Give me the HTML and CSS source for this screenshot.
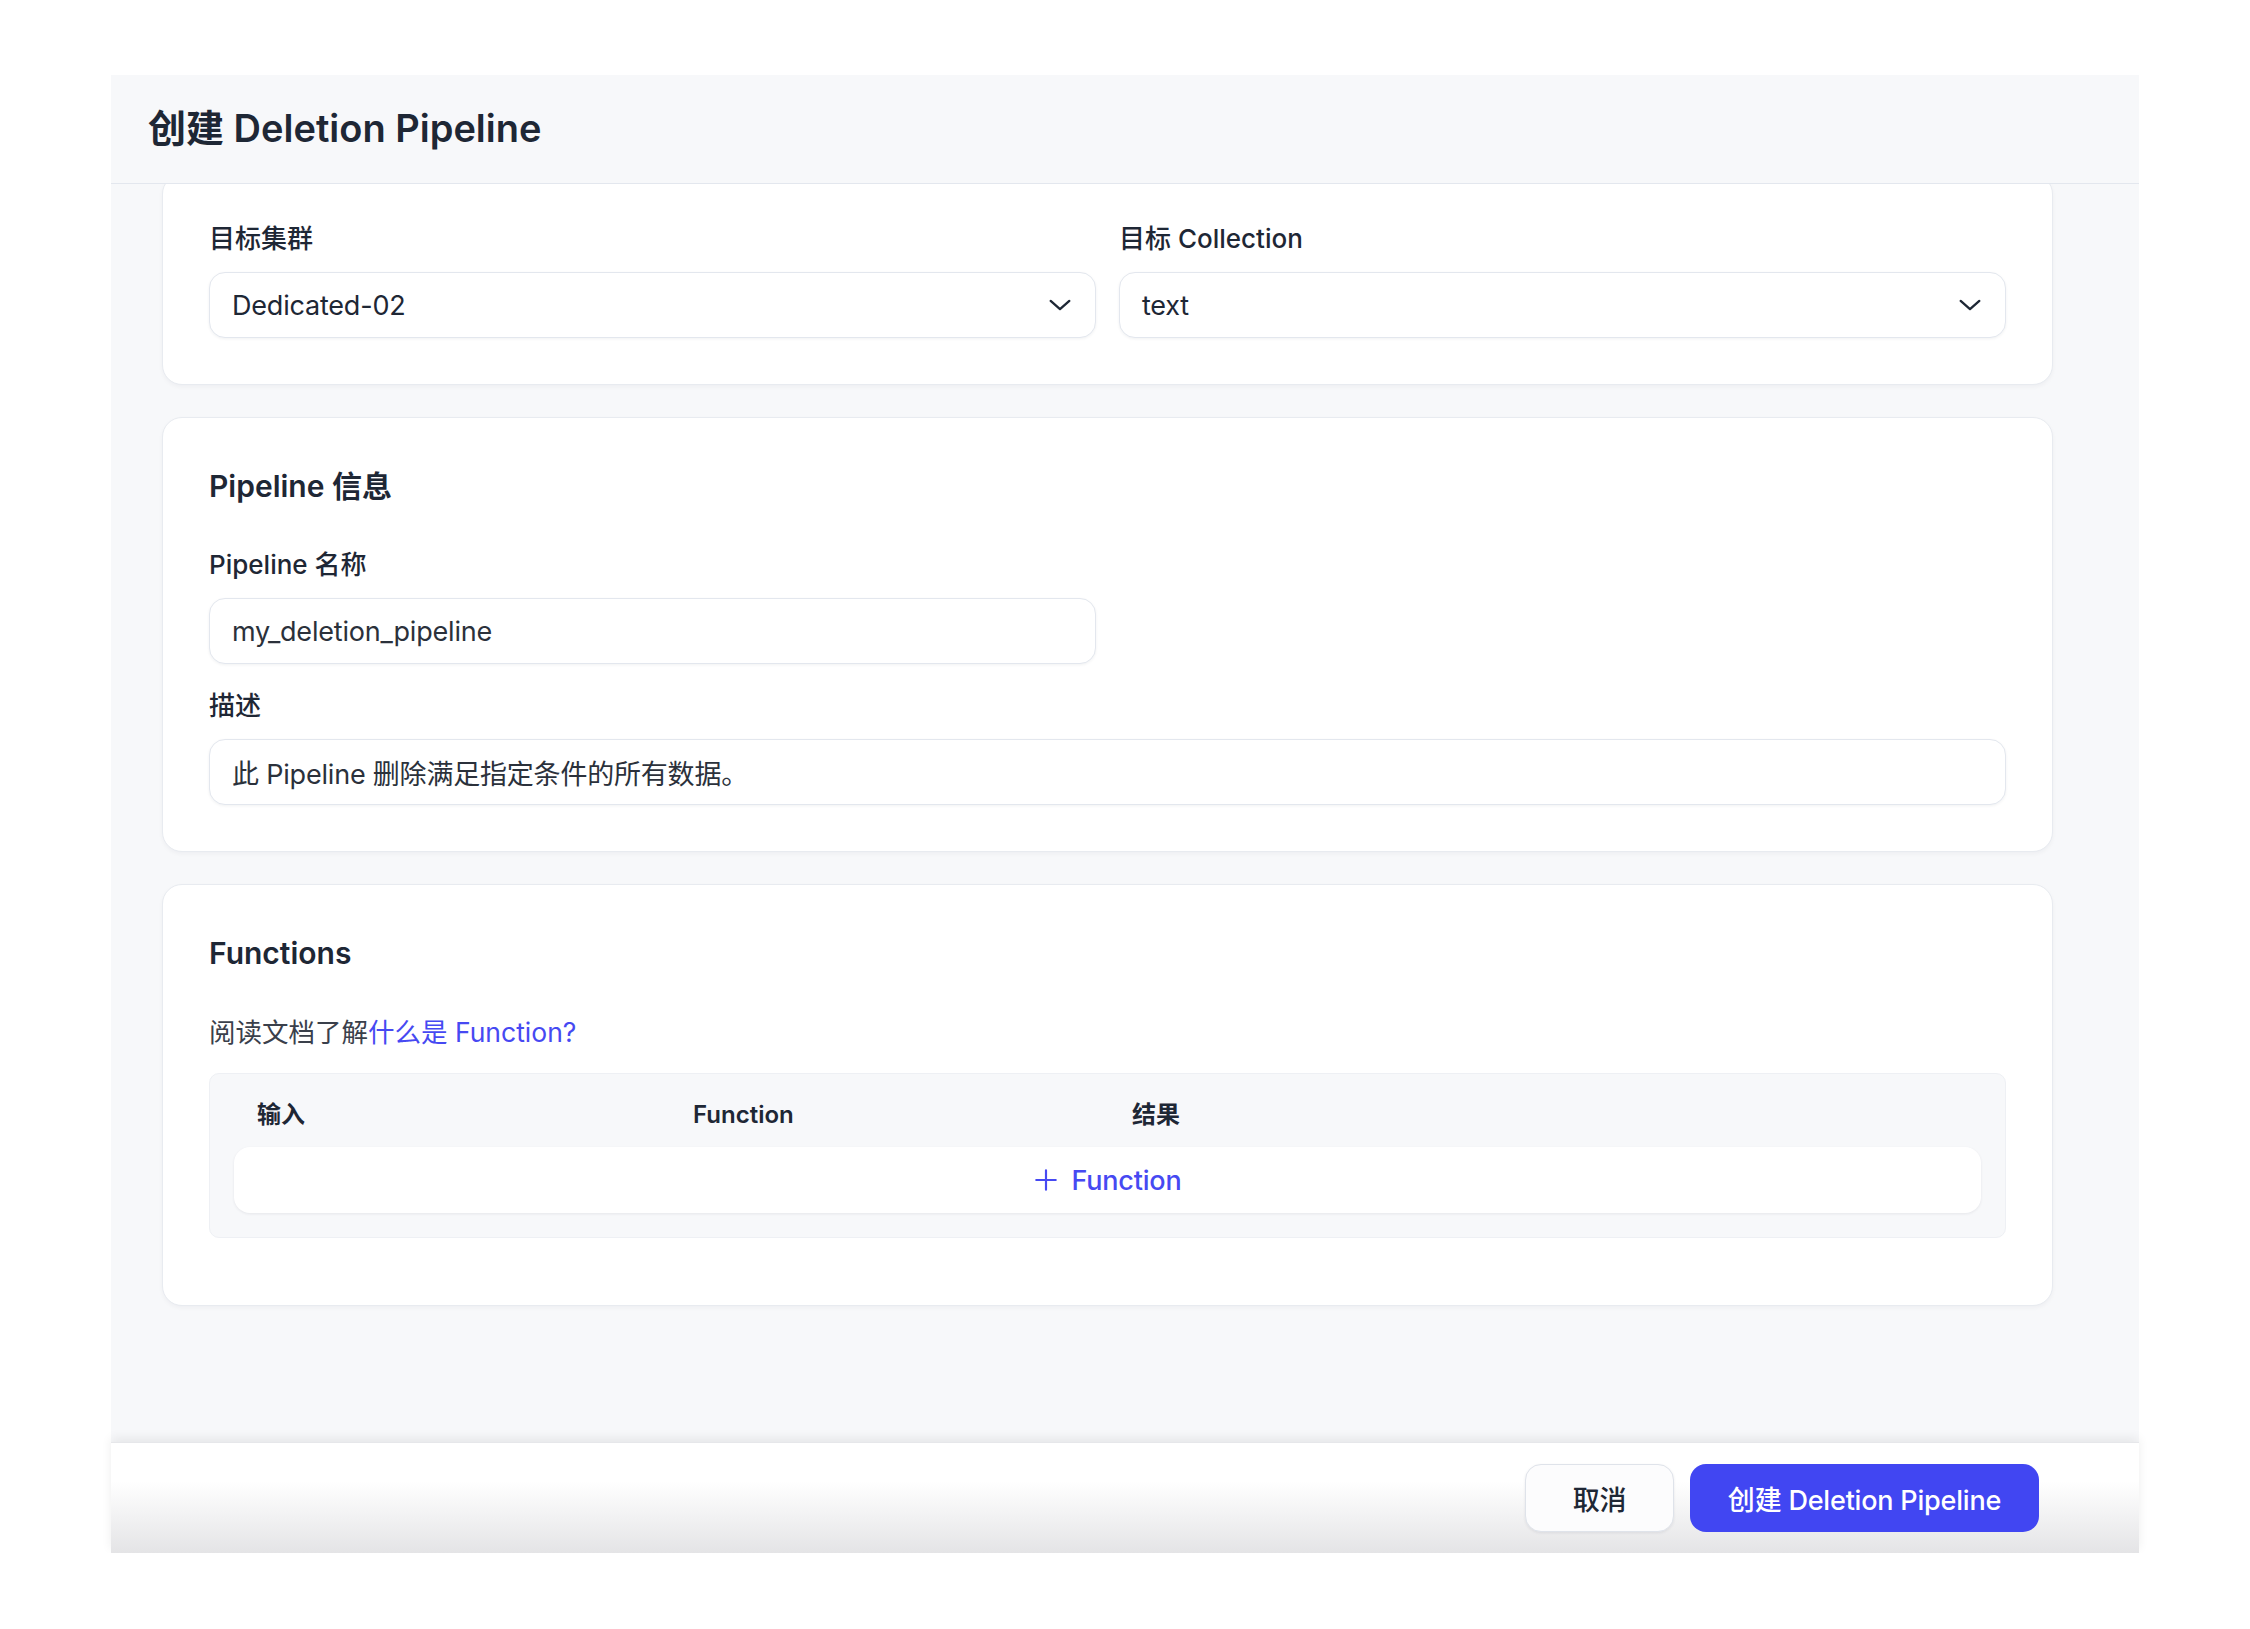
FILE: index.html
```html
<!DOCTYPE html>
<html>
<head>
    <meta charset="utf-8">
    <link rel="stylesheet" href="styles.css">
</head>
<body>
    <div class="dialog">
        <div class="dialog-header">
            <h1 class="dialog-title">创建 Deletion Pipeline</h1>
        </div>

        <div class="dialog-body">
            <!-- target -->
            <div class="card card-first">
                <div class="field-row">
                    <div class="field">
                        <label class="field-label">目标集群</label>
                        <div class="select">
                            <span>Dedicated-02</span>
                            <svg class="chevron" viewBox="0 0 24 24" width="24" height="24"><path d="M4 8.5l8 7 8-7" fill="none" stroke="currentColor" stroke-width="2" stroke-linecap="round" stroke-linejoin="round"/></svg>
                        </div>
                    </div>
                    <div class="field">
                        <label class="field-label">目标 Collection</label>
                        <div class="select">
                            <span>text</span>
                            <svg class="chevron" viewBox="0 0 24 24" width="24" height="24"><path d="M4 8.5l8 7 8-7" fill="none" stroke="currentColor" stroke-width="2" stroke-linecap="round" stroke-linejoin="round"/></svg>
                        </div>
                    </div>
                </div>
            </div>

            <!-- pipeline info -->
            <div class="card">
                <h2 class="card-title">Pipeline 信息</h2>
                <label class="field-label">Pipeline 名称</label>
                <div class="input input-half">my_deletion_pipeline</div>
                <label class="field-label label-gap">描述</label>
                <div class="input">此 Pipeline 删除满足指定条件的所有数据。</div>
            </div>

            <!-- functions -->
            <div class="card">
                <h2 class="card-title">Functions</h2>
                <p class="doc-hint">阅读文档了解<a href="#" class="doc-link">什么是 Function?</a></p>
                <div class="fn-table">
                    <div class="fn-head">
                        <span>输入</span>
                        <span>Function</span>
                        <span>结果</span>
                    </div>
                    <div class="fn-add">
                        <svg viewBox="0 0 24 24" width="24" height="24"><path d="M12 3v18M3 12h18" fill="none" stroke="currentColor" stroke-width="2" stroke-linecap="round"/></svg>
                        <span>Function</span>
                    </div>
                </div>
            </div>
        </div>

        <div class="dialog-footer">
            <button class="btn btn-cancel">取消</button>
            <button class="btn btn-primary">创建 Deletion Pipeline</button>
        </div>
    </div>
</body>
</html>
```

FILE: styles.css
```css
body {
    margin: 0;
    padding: 0;
    background-color: white;
    font-family: Inter, "Noto Sans CJK SC", sans-serif;
    color: #1e2735;
}

.dialog {
    margin: 75px 0 0 111px;
    width: 2028px;
    height: 1478px;
    display: flex;
    flex-direction: column;
    background-color: #f7f8fa;
}

.dialog-header {
    height: 108px;
    display: flex;
    align-items: center;
    padding-left: 37px;
    border-bottom: 1px solid #e3e7ee;
}

.dialog-title {
    margin: 0 0 2px;
    font-size: 38px;
    line-height: 46px;
    font-weight: 600;
}

.dialog-body {
    flex: 1;
    overflow: hidden;
    padding: 0 86px 0 51px;
}

.card {
    background-color: white;
    border: 1px solid #e8ebf0;
    border-radius: 20px;
    box-shadow: 0 2px 4px rgba(20, 30, 50, 0.04);
    padding: 46px;
    margin-bottom: 32px;
}

.card-first {
    margin-top: -10px;
}

.field-row {
    display: flex;
    gap: 23px;
}

.field {
    flex: 1;
}

.field-label {
    display: block;
    font-size: 26px;
    line-height: 36px;
    font-weight: 500;
    margin-bottom: 15px;
}

.label-gap {
    margin-top: 24px;
}

.select,
.input {
    height: 64px;
    box-sizing: content-box;
    border: 1px solid #e3e7ee;
    border-radius: 16px;
    box-shadow: 0 1px 3px rgba(20, 30, 50, 0.06);
    padding: 0 22px;
    display: flex;
    align-items: center;
    font-size: 27px;
    letter-spacing: -0.2px;
    color: #2b313b;
    background-color: white;
}

.select {
    justify-content: space-between;
    color: #1e2735;
}

.chevron {
    width: 28px;
    height: 28px;
    margin-right: -1px;
    color: #1e2735;
}

.input-half {
    width: calc(50% - 11.5px - 46px);
}

.card-title {
    margin: 0 0 38px;
    font-size: 30px;
    line-height: 45px;
    font-weight: 600;
}

.doc-hint {
    margin: 0 0 23px;
    font-size: 26.5px;
    line-height: 36px;
    color: #3a404b;
}

.doc-link {
    color: #4649f2;
    text-decoration: none;
}

.fn-table {
    background-color: #f7f8fa;
    border: 1px solid #eef0f4;
    border-radius: 10px;
    padding: 25px 24px 24px;
    margin-bottom: 21px;
}

.fn-head {
    display: grid;
    grid-template-columns: 436px 439px 1fr;
    padding-left: 23px;
    font-size: 24px;
    line-height: 32px;
    font-weight: 600;
    margin-bottom: 16px;
}

.fn-add {
    height: 66px;
    background-color: white;
    border-radius: 16px;
    box-shadow: 0 1px 3px rgba(20, 30, 50, 0.08);
    display: flex;
    align-items: center;
    justify-content: center;
    gap: 12px;
    color: #4649f2;
    font-size: 27px;
    letter-spacing: -0.2px;
    font-weight: 500;
}

.fn-add svg {
    width: 26px;
    height: 26px;
}

.dialog-footer {
    position: relative;
    height: 110px;
    display: flex;
    align-items: center;
    justify-content: flex-end;
    gap: 16px;
    padding-right: 100px;
    background: linear-gradient(#ffffff 35%, #e4e4e6 100%);
    box-shadow: 0 -4px 10px rgba(0, 0, 0, 0.07);
    border-top: 1px solid #e6e7ea;
}

.btn {
    height: 68px;
    border-radius: 16px;
    font-family: Inter, "Noto Sans CJK SC", sans-serif;
    font-size: 27px;
    letter-spacing: -0.2px;
    font-weight: 500;
    cursor: pointer;
}

.btn-cancel {
    width: 149px;
    background-color: #fcfcfd;
    border: 1px solid #dfe3ea;
    box-shadow: 0 1px 3px rgba(20, 30, 50, 0.08);
    color: #1e2735;
}

.btn-primary {
    width: 349px;
    background-color: #4146f2;
    border: none;
    color: white;
}
```
